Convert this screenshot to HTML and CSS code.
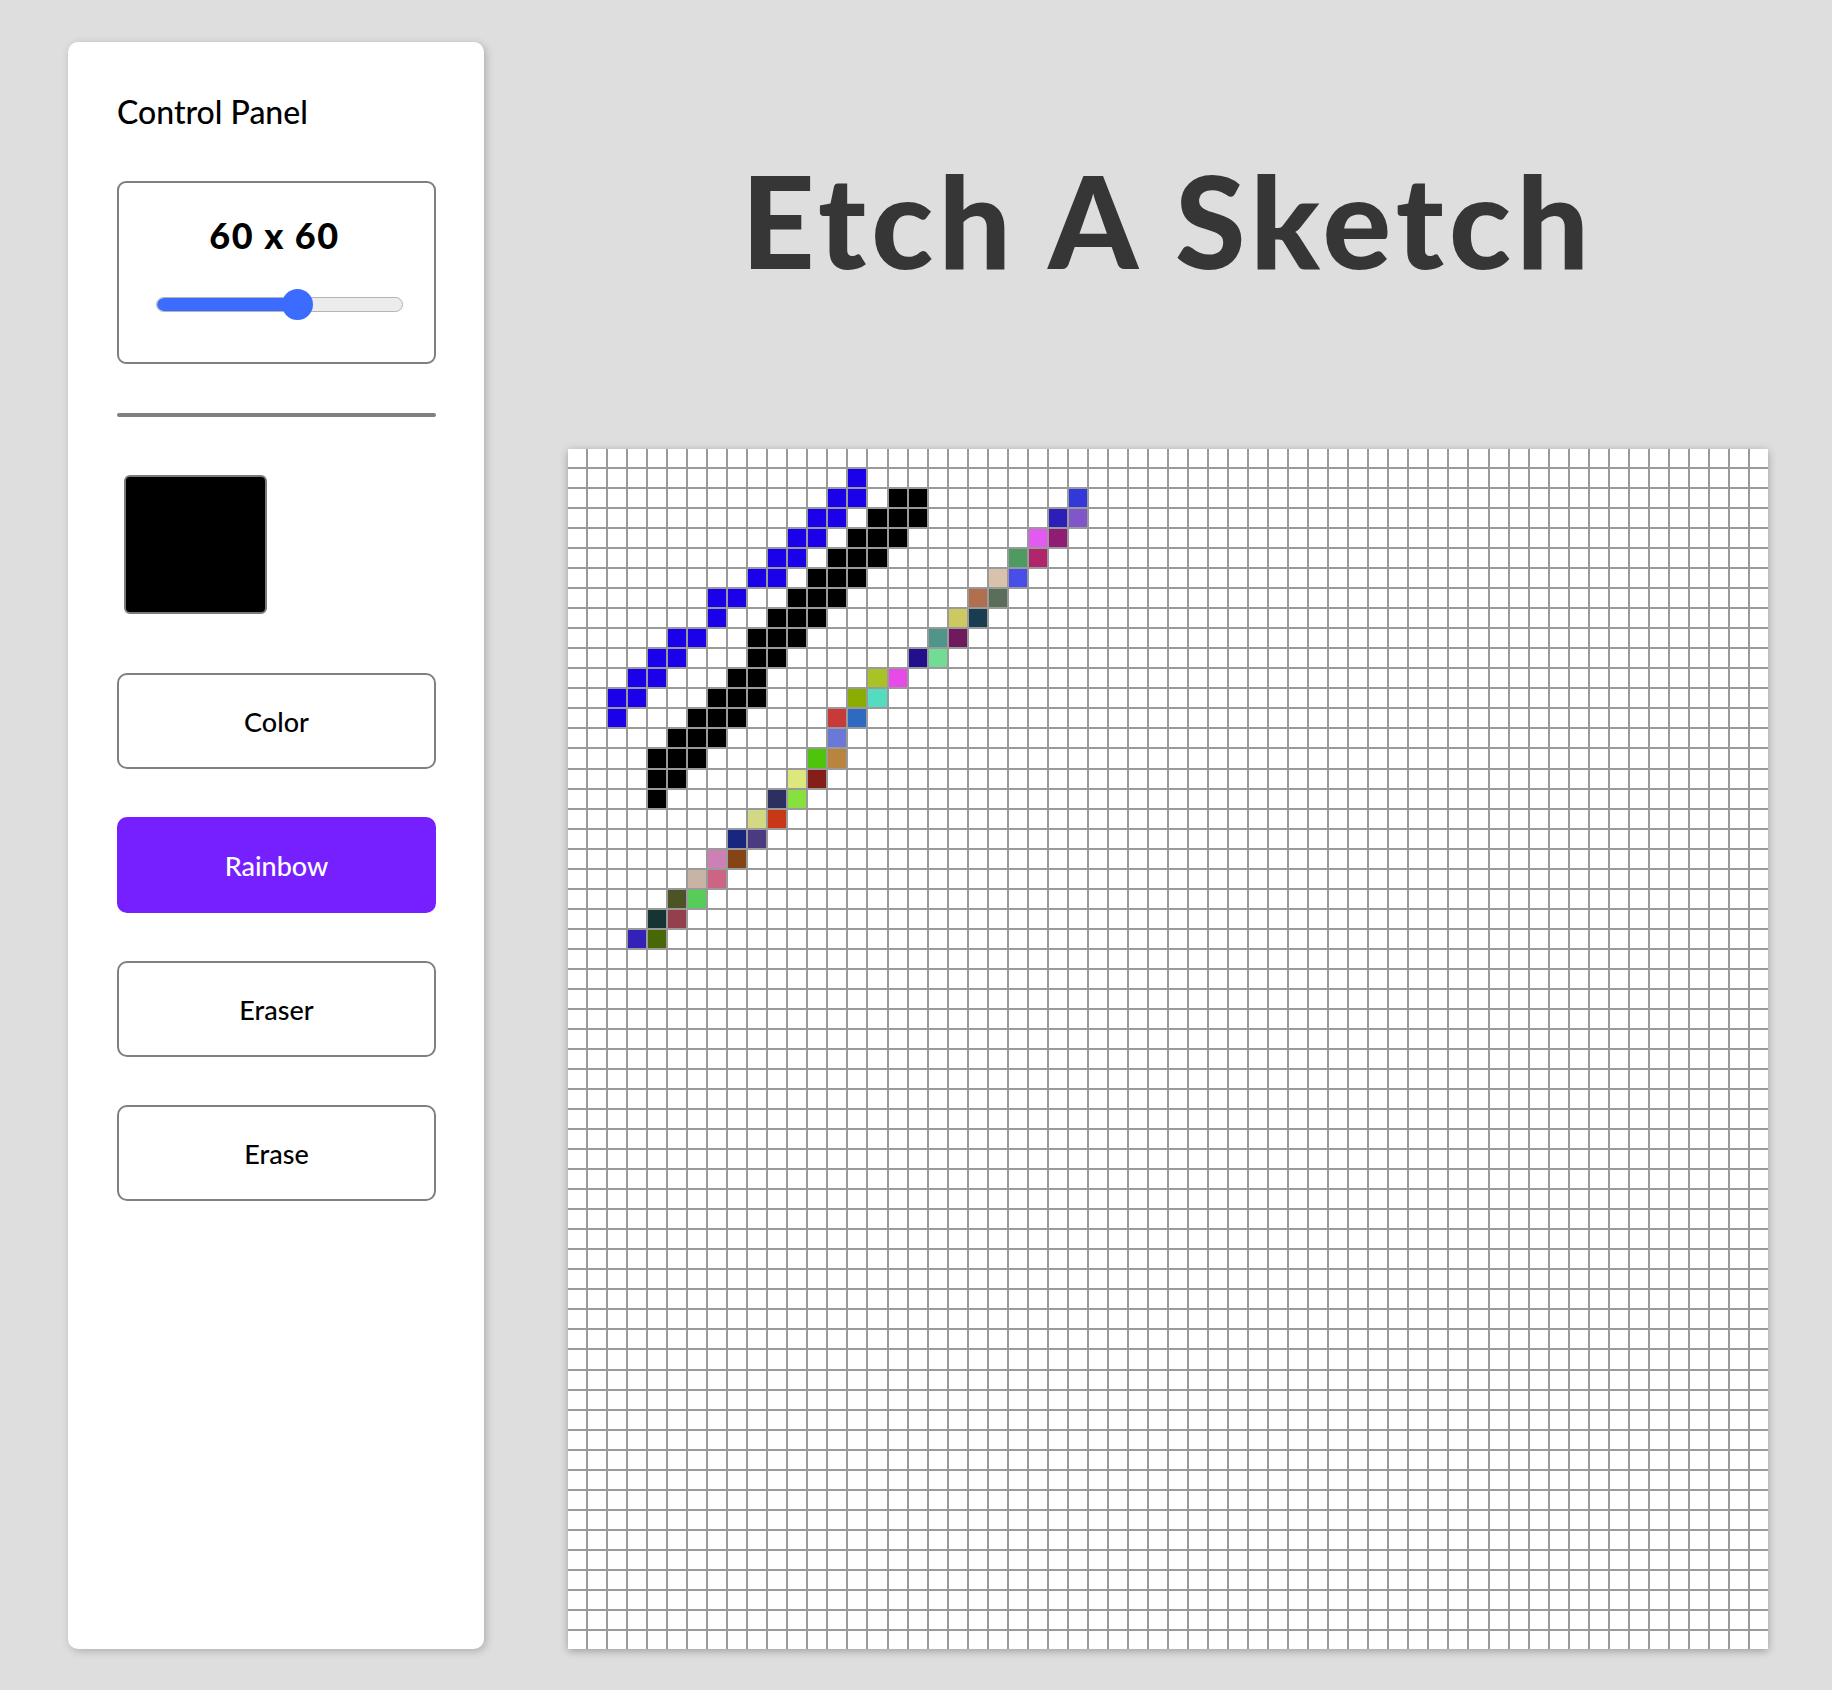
FILE: index.html
```html
<!DOCTYPE html>
<html lang="en">
<head>
<meta charset="utf-8">
<title>Etch A Sketch</title>
<link rel="stylesheet" href="styles.css">
</head>
<body>
<div class="app">
  <aside class="panel">
    <h2 class="panel-title">Control Panel</h2>
    <div class="size-box">
      <div class="size-label">60 x 60</div>
      <div class="slider-wrap">
        <div class="slider">
          <div class="track"><div class="fill" style="width:142px"></div></div>
          <div class="thumb" style="left:126px"></div>
        </div>
      </div>
    </div>
    <hr class="divider">
    <div class="swatch"></div>
    <button class="btn">Color</button>
    <button class="btn btn-active">Rainbow</button>
    <button class="btn">Eraser</button>
    <button class="btn">Erase</button>
  </aside>
  <main class="main">
    <h1 class="title">Etch A Sketch</h1>
    <div class="board" id="board"></div>
  </main>
</div>
<script src="script.js"></script>
</body>
</html>
```

FILE: styles.css
```css
* { box-sizing: border-box; }
html, body { margin: 0; padding: 0; }
body {
  background: #dedede;
  font-family: "Lato", "Noto Sans", sans-serif;
  color: #000;
}
.app {
  display: flex;
  gap: 84px;
  padding: 42px 64px 41px 68px;
  align-items: stretch;
}
.panel {
  width: 416px;
  flex: none;
  background: #fff;
  border-radius: 10px;
  box-shadow: 2px 2px 8px rgba(0,0,0,0.22);
  padding: 50px 48px 0 49px;
  display: flex;
  flex-direction: column;
}
.panel-title {
  margin: 0;
  font-size: 32px;
  line-height: 40px;
  font-weight: 500;
}
.size-box {
  margin-top: 49px;
  height: 183px;
  border: 2px solid #7f7f7f;
  border-radius: 9px;
  padding-top: 32px;
}
.size-label {
  text-align: center;
  font-weight: 900;
  font-size: 36px;
  line-height: 40px;
  letter-spacing: 1.5px;
  padding-right: 4px;
}
.slider-wrap {
  margin-top: 34px;
  padding-left: 37px;
}
.slider {
  position: relative;
  width: 247px;
  height: 31px;
}
.track {
  position: absolute;
  left: 0; right: 0; top: 8px;
  height: 15px;
  border-radius: 8px;
  background: #ececec;
  border: 1px solid #b4b4b4;
  overflow: hidden;
}
.fill {
  height: 100%;
  background: #3b6cff;
  border-radius: 8px 0 0 8px;
}
.thumb {
  position: absolute;
  top: 0;
  width: 31px;
  height: 31px;
  border-radius: 50%;
  background: #3b6cff;
}
.divider {
  margin: 49px 0 0;
  border: none;
  height: 4px;
  background: #808080;
  border-radius: 2px;
}
.swatch {
  margin: 58px 0 0 7px;
  width: 143px;
  height: 139px;
  background: #000;
  border: 2px solid #7a7a7a;
  border-radius: 6px;
}
.btn {
  display: block;
  width: 100%;
  height: 96px;
  margin-top: 48px;
  background: #fff;
  border: 2px solid #808080;
  border-radius: 10px;
  font-family: "Lato", "Noto Sans", sans-serif;
  font-size: 27px;
  font-weight: 500;
  color: #000;
  cursor: pointer;
}
.swatch + .btn { margin-top: 59px; }
.btn-active {
  background: #761fff;
  border-color: #761fff;
  color: #fff;
}
.main {
  width: 1200px;
  flex: none;
  display: flex;
  flex-direction: column;
}
.title {
  margin: 114px 0 165px;
  text-align: center;
  font-size: 128px;
  line-height: 128px;
  font-weight: 900;
  letter-spacing: 5.5px;
  color: #363636;
}
.board {
  width: 1200px;
  height: 1200px;
  display: grid;
  grid-template-columns: repeat(60, 1fr);
  grid-template-rows: repeat(60, 1fr);
  gap: 2px;
  background: #9a9a9a;
  box-shadow: 0 2px 8px rgba(0,0,0,0.3);
}
.cell { background: #fff; }
```

FILE: script.js
```js
(function () {
  var BLUE = '#1b00ea', BLACK = '#000000';
  var blue = {1:[14],2:[13,14],3:[12,13],4:[11,12],5:[10,11],6:[9,10],7:[7,8],8:[7],9:[5,6],10:[4,5],11:[3,4],12:[2,3],13:[2]};
  var black = {2:[16,17],3:[15,16,17],4:[14,15,16],5:[13,14,15],6:[12,13,14],7:[11,12,13],8:[10,11,12],9:[9,10,11],10:[9,10],11:[8,9],12:[7,8,9],13:[6,7,8],14:[5,6,7],15:[4,5,6],16:[4,5],17:[4]};
  var rainbow = [
    [2,25,'#3339d9'],
    [3,24,'#2c1fb8'],[3,25,'#8057c9'],
    [4,23,'#e25af0'],[4,24,'#901d74'],
    [5,22,'#4f9a60'],[5,23,'#b0266a'],
    [6,21,'#d8c2ac'],[6,22,'#4a4ee8'],
    [7,20,'#b07050'],[7,21,'#5b6e5a'],
    [8,19,'#cec860'],[8,20,'#183c50'],
    [9,18,'#50958a'],[9,19,'#6e1a5c'],
    [10,17,'#220f8c'],[10,18,'#72dc94'],
    [11,15,'#a9c225'],[11,16,'#e84ae8'],
    [12,14,'#8aad00'],[12,15,'#54dcc0'],
    [13,13,'#c83a3a'],[13,14,'#2e6bc0'],
    [14,13,'#6a78d8'],
    [15,12,'#4ec40a'],[15,13,'#b8843e'],
    [16,11,'#dce87c'],[16,12,'#841e16'],
    [17,10,'#2c3060'],[17,11,'#88e03e'],
    [18,9,'#d2d884'],[18,10,'#c83816'],
    [19,8,'#182680'],[19,9,'#4a3a80'],
    [20,7,'#cc80b4'],[20,8,'#844416'],
    [21,6,'#c8b4a4'],[21,7,'#cc6484'],
    [22,5,'#4c5426'],[22,6,'#58cc58'],
    [23,4,'#163434'],[23,5,'#94404c'],
    [24,3,'#3422b8'],[24,4,'#486808']
  ];
  var map = {};
  function addRows(obj, color) {
    Object.keys(obj).forEach(function (r) {
      obj[r].forEach(function (c) { map[r + ',' + c] = color; });
    });
  }
  addRows(blue, BLUE);
  addRows(black, BLACK);
  rainbow.forEach(function (p) { map[p[0] + ',' + p[1]] = p[2]; });

  var board = document.getElementById('board');
  var frag = document.createDocumentFragment();
  for (var r = 0; r < 60; r++) {
    for (var c = 0; c < 60; c++) {
      var d = document.createElement('div');
      d.className = 'cell';
      var col = map[r + ',' + c];
      if (col) d.style.background = col;
      frag.appendChild(d);
    }
  }
  board.appendChild(frag);
})();
```
